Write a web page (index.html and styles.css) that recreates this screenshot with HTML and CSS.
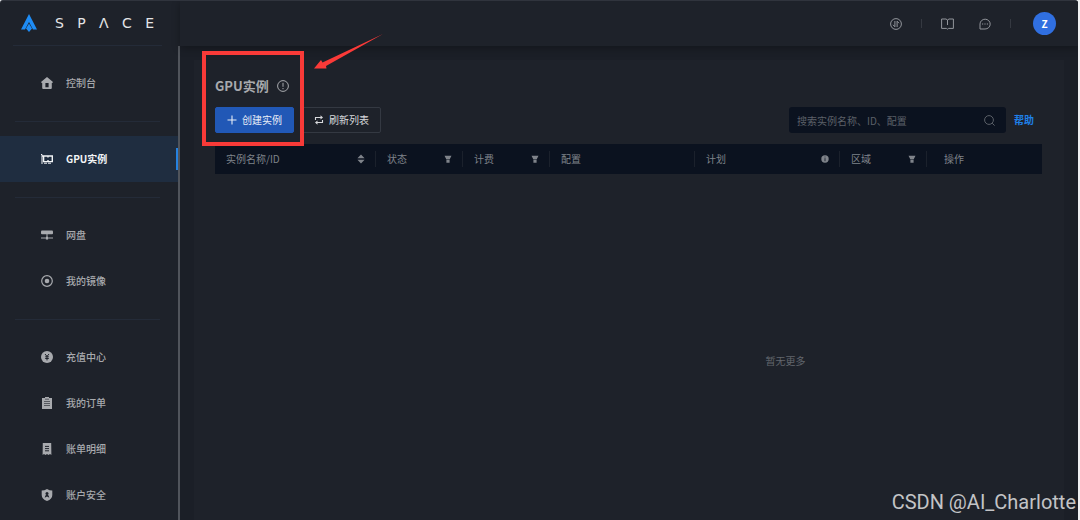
FILE: index.html
```html
<!DOCTYPE html>
<html lang="zh-CN">
<head>
  <meta charset="utf-8">
  <title>GPU实例</title>
  <link rel="stylesheet" href="styles.css">
</head>
<body>

  <div class="window">
    <aside class="sidebar">
      <a class="logo" href="#" aria-label="SPACE">
        <svg width="16" height="18" viewBox="0 0 16 18" fill="#1e8cf5">
          <path d="M8 0 L16 15.5 L12 15.5 L8 8 L4 15.5 L0 15.5 Z"/>
          <path d="M8 9.5 L11 14.5 L8 18 L5 14.5 Z"/>
        </svg>
        <span class="logo-name"><span>S</span><span>P</span><span>Λ</span><span>C</span><span>E</span></span>
      </a>

      <nav class="menu">
        <a class="menu-item" href="#">
          <svg width="12" height="12" viewBox="0 0 12 12"><path fill="currentColor" fill-rule="evenodd" d="M6 0 L12 5 L11.3 6 L10.8 6 V11 Q10.8 12 9.8 12 H2.2 Q1.2 12 1.2 11 V6 H.7 L0 5 Z M4.4 6 V10.3 H7.6 V6 Z"/></svg>
          控制台
        </a>
        <hr>
        <a class="menu-item active" href="#">
          <svg width="12" height="12" viewBox="0 0 12 12" fill="none" stroke="currentColor">
            <path d="M0 1.5 H1 V11" stroke-width="1"/>
            <path d="M1 3 H11.3 V8.6 H2.6 V3 M7 3 V4.6 M7 7 V8.6" stroke-width="1.4"/>
            <path d="M3 10.2 H10" stroke-width="1" stroke-dasharray="3 1"/>
          </svg>
          GPU实例
        </a>
        <hr>
        <a class="menu-item" href="#">
          <svg width="12" height="12" viewBox="0 0 12 12" fill="currentColor">
            <rect x="0" y="1.6" width="12" height="3.6" rx="1"/>
            <path d="M5.5 5 H6.5 V8 H5.5 Z M0 8.6 H4.3 V9.6 H0 Z M7.7 8.6 H12 V9.6 H7.7 Z"/>
            <circle cx="6" cy="9.1" r="1.6"/>
          </svg>
          网盘
        </a>
        <a class="menu-item" href="#">
          <svg width="12" height="12" viewBox="0 0 12 12">
            <circle cx="6" cy="6" r="5.3" fill="none" stroke="currentColor" stroke-width="1.2"/>
            <circle cx="6" cy="6" r="2.3" fill="currentColor"/>
          </svg>
          我的镜像
        </a>
        <hr>
        <a class="menu-item" href="#">
          <svg width="12" height="12" viewBox="0 0 12 12">
            <circle cx="6" cy="6" r="6" fill="currentColor"/>
            <path d="M4 3 L6 5.4 L8 3 M6 5.4 V9.4 M4.2 5.8 H7.8 M4.2 7.5 H7.8" fill="none" stroke="#1e222a"/>
          </svg>
          充值中心
        </a>
        <a class="menu-item" href="#">
          <svg width="12" height="12" viewBox="0 0 12 12">
            <path fill="currentColor" d="M1 1 H4 V0 H8 V1 H11 V12 H1 Z"/>
            <path d="M4 2.2 H8 M3 4.5 H9 M3 6.5 H9 M3 8.5 H9" stroke="#1e222a" stroke-width=".6"/>
          </svg>
          我的订单
        </a>
        <a class="menu-item" href="#">
          <svg width="12" height="12" viewBox="0 0 12 12">
            <path fill="currentColor" d="M1.8 0 H10.2 L10.4 12 L9 11 L7.5 12 L6 11 L4.5 12 L3 11 L1.6 12 Z"/>
            <path d="M4 3.4 H8 M4 5.6 H8 M4 7.8 H8" stroke="#1e222a" stroke-width="1"/>
          </svg>
          账单明细
        </a>
        <a class="menu-item" href="#">
          <svg width="12" height="12" viewBox="0 0 12 12">
            <path fill="currentColor" d="M6 0 Q8.5 1.5 11.3 1.6 V6 Q11.3 10 6 12 Q.7 10 .7 6 V1.6 Q3.5 1.5 6 0 Z"/>
            <circle cx="6" cy="4.5" r="1.5" fill="#1e222a"/>
            <path d="M3.8 9 Q4 5.7 6 5.7 Q8 5.7 8.2 9 L7 7.8 H5 Z" fill="#1e222a"/>
          </svg>
          账户安全
        </a>
      </nav>
    </aside>

    <div class="page">
      <header class="topbar">
        <button class="icon-button" aria-label="切换">
          <svg width="12" height="12" viewBox="0 0 12 12" fill="none" stroke="currentColor">
            <circle cx="6" cy="6" r="5.4"/>
            <path d="M4.9 3 V8.8 L3 6.8 M7.1 9 V3.2 L9 5.2"/>
          </svg>
        </button>
        <span class="split"></span>
        <button class="icon-button" aria-label="文档">
          <svg width="13" height="12" viewBox="0 0 13 12" fill="none" stroke="currentColor">
            <path d="M.6 1 H5 L6.5 2 L8 1 H12.4 V10.4 H7.6 L6.5 11.2 L5.4 10.4 H.6 Z M6.5 2 V7"/>
          </svg>
        </button>
        <button class="icon-button" aria-label="消息">
          <svg width="12" height="12" viewBox="0 0 12 12" fill="none" stroke="currentColor">
            <path d="M1 11 V6 A5.1 4.9 0 1 1 6 11 Z"/>
            <path d="M3 6 H4.2 M5.4 6 H6.6 M7.8 6 H9" stroke-width="1.2"/>
          </svg>
        </button>
        <span class="split"></span>
        <button class="avatar">Z</button>
      </header>

      <main class="content">
        <h1 class="title">
          GPU实例
          <svg width="12" height="12" viewBox="0 0 12 12" fill="none" stroke="currentColor">
            <circle cx="6" cy="6" r="5.4"/>
            <path d="M6 2.8 V6.8 M6 8 V9.2"/>
          </svg>
        </h1>

        <div class="toolbar">
          <button class="btn primary">
            <svg width="10" height="10" viewBox="0 0 10 10" stroke="currentColor"><path d="M5 .5 V9.5 M.5 5 H9.5" stroke-width="1.1"/></svg>
            创建实例
          </button>
          <button class="btn">
            <svg width="10" height="10" viewBox="0 0 10 10" fill="none" stroke="currentColor">
              <path d="M1.5 5 V2.5 H7 M8.5 5 V7.5 H3" stroke-width="1.1"/>
              <path d="M6.5 .3 L9 2.5 L6.5 4.5 Z M3.5 5.5 L1 7.5 L3.5 9.7 Z" fill="currentColor" stroke="none"/>
            </svg>
            刷新列表
          </button>
          <label class="search">
            <input type="text" placeholder="搜索实例名称、ID、配置" aria-label="搜索">
            <svg width="11" height="11" viewBox="0 0 11 11" fill="none" stroke="currentColor">
              <circle cx="5" cy="5" r="4.4"/>
              <path d="M8.2 8.2 L10.6 10.6"/>
            </svg>
          </label>
          <a class="help" href="#">帮助</a>
        </div>

        <table class="list">
          <colgroup>
            <col>
            <col class="col-small">
            <col class="col-small">
            <col class="col-medium">
            <col class="col-medium">
            <col class="col-small">
            <col class="col-action">
          </colgroup>
          <thead>
            <tr>
              <th><div class="cell">实例名称/ID
                <svg width="8" height="10" viewBox="0 0 8 10" fill="currentColor"><path d="M4 .5 L7.6 4.2 H.4 Z M4 9.5 L7.6 5.8 H.4 Z"/></svg></div></th>
              <th><div class="cell">状态
                <svg width="8" height="8" viewBox="0 0 8 8" fill="currentColor"><path d="M.5 .8 H7.5 L5.6 4.4 H2.4 Z M2.4 5 H5.6 V7.8 H2.4 Z"/></svg></div></th>
              <th><div class="cell">计费
                <svg width="8" height="8" viewBox="0 0 8 8" fill="currentColor"><path d="M.5 .8 H7.5 L5.6 4.4 H2.4 Z M2.4 5 H5.6 V7.8 H2.4 Z"/></svg></div></th>
              <th><div class="cell">配置</div></th>
              <th><div class="cell">计划
                <svg width="8" height="8" viewBox="0 0 8 8"><circle cx="4" cy="4" r="3.7" fill="currentColor"/><path d="M4 1.6 V2.4 M4 3.2 V6.2" stroke="#0b121f" stroke-width=".8"/></svg></div></th>
              <th><div class="cell">区域
                <svg width="8" height="8" viewBox="0 0 8 8" fill="currentColor"><path d="M.5 .8 H7.5 L5.6 4.4 H2.4 Z M2.4 5 H5.6 V7.8 H2.4 Z"/></svg></div></th>
              <th><div class="cell">操作</div></th>
            </tr>
          </thead>
        </table>

        <p class="empty">暂无更多</p>
      </main>
    </div>
  </div>

  <!-- Red marker around the create button -->
  <div class="marker"></div>
  <svg class="arrow" width="70" height="36" viewBox="0 0 70 36">
    <path fill="#fb3a38" d="M0 34.5 L7 26 L8.5 28.5 L69 0 L12 32 L12.5 34.5 Z"/>
  </svg>
  <div class="watermark">CSDN @AI_Charlotte</div>

</body>
</html>
```
FILE: styles.css
```css
* {
  box-sizing: border-box;
}

body {
  margin: 0;
  background: #f0f1f3;
  font-family: "Noto Sans CJK SC", sans-serif;
  font-size: 10px;
  line-height: 14px;
  color: #a8aaae;
}

a {
  color: inherit;
  text-decoration: none;
}

button {
  border: none;
  background: none;
  padding: 0;
  font-family: inherit;
  font-size: 10px;
  line-height: 14px;
  color: inherit;
  cursor: pointer;
}

svg {
  flex: none;
}

.window {
  display: flex;
  height: 100vh;
  margin-right: 2px;
  background: #1e222a;
  border-top: 1px solid #30343d;
  border-radius: 3px 3px 0 0;
  overflow: hidden;
}

/* Sidebar */
.sidebar {
  width: 180px;
  flex: none;
  display: flex;
  flex-direction: column;
}

.logo {
  height: 45px;
  flex: none;
  display: flex;
  align-items: center;
  gap: 18px;
  margin: 0 18px 0 13px;
  padding: 0 8px;
  border-bottom: 1px solid #242b38;
}

.logo-name {
  flex: 1;
  display: flex;
  justify-content: space-between;
  font-family: "DejaVu Sans", sans-serif;
  font-size: 14px;
  line-height: 16px;
  color: #e4e5e7;
}

.menu {
  flex: 1;
  min-height: 0;
  overflow: hidden;
  padding-top: 14px;
  border-right: 2px solid #50545b;
}

.menu-item {
  display: flex;
  align-items: center;
  gap: 13px;
  height: 46px;
  padding-left: 41px;
  font-weight: 500;
}

.menu-item.active {
  background: #1f2d40;
  color: #f2f4f6;
  font-weight: bold;
  position: relative;
}

.menu-item.active::after {
  content: "";
  position: absolute;
  right: 0;
  top: 12px;
  width: 2px;
  height: 22px;
  background: #2682e0;
}

.menu hr {
  height: 1px;
  margin: 15px 18px 14px 15px;
  border: none;
  background: #242b38;
}

/* Right side */
.page {
  flex: 1;
  min-width: 0;
  display: flex;
  flex-direction: column;
  background: #1b1f27;
}

.topbar {
  height: 45px;
  flex: none;
  display: flex;
  align-items: center;
  justify-content: flex-end;
  padding-right: 22px;
  background: #1e222a;
  box-shadow: 0 2px 8px rgba(0, 0, 0, 0.3);
}

.icon-button {
  display: flex;
  justify-content: center;
  width: 38px;
  color: #92959b;
}

.split {
  width: 1px;
  height: 9px;
  margin: 0 6px;
  background: #353941;
}

.avatar {
  width: 23px;
  height: 23px;
  margin-left: 16px;
  border-radius: 50%;
  background: #306fe0;
  color: #fff;
  font-weight: bold;
}

.content {
  flex: 1;
  margin: 14px 14px 0;
  padding: 16px 22px 0 21px;
  background: #1e222a;
}

.title {
  display: flex;
  align-items: center;
  gap: 8px;
  margin: 0 0 11px;
  font-size: 13px;
  line-height: 20px;
}

.toolbar {
  display: flex;
  align-items: center;
  gap: 8px;
  margin-bottom: 11px;
}

.btn {
  display: flex;
  align-items: center;
  justify-content: center;
  gap: 5px;
  width: 79px;
  height: 26px;
  border: 1px solid #343942;
  border-radius: 2px;
  color: #d8d9dc;
}

.btn.primary {
  background: #2158b6;
  border-color: #2158b6;
  color: #e8edf6;
}

.search {
  display: flex;
  align-items: center;
  width: 217px;
  height: 26px;
  margin-left: auto;
  padding: 0 11px 0 8px;
  border-radius: 3px;
  background: #0b121f;
  color: #5b6068;
}

.search input {
  flex: 1;
  min-width: 0;
  padding: 0;
  border: none;
  outline: none;
  background: none;
  font-family: inherit;
  font-size: 10px;
  color: #a8aaae;
}

.search input::placeholder {
  color: #5b6068;
}

.help {
  margin-right: 8px;
  color: #1f80e8;
  font-weight: bold;
}

/* Table */
.list {
  width: 100%;
  table-layout: fixed;
  border-collapse: collapse;
  background: #0b121f;
}

.col-small {
  width: 87px;
}

.col-medium {
  width: 145px;
}

.col-action {
  width: 115px;
}

.list th {
  height: 30px;
  padding: 0;
  font-weight: normal;
  color: #7f838a;
}

.cell {
  display: flex;
  align-items: center;
  justify-content: space-between;
  height: 16px;
  padding: 0 10px 0 11px;
  border-right: 1px solid #1b212c;
}

.list th:last-child .cell {
  padding-left: 17px;
  border-right: none;
}

.empty {
  margin: 180px 0 0;
  padding-left: 314px;
  text-align: center;
  color: #62666d;
}

/* Things lying over the page */
.marker {
  position: absolute;
  left: 202px;
  top: 51px;
  width: 102px;
  height: 95px;
  border: 4px solid #f83a38;
}

.arrow {
  position: absolute;
  left: 314px;
  top: 34px;
}

.watermark {
  position: absolute;
  right: 4px;
  bottom: 6px;
  font-family: Roboto, sans-serif;
  font-size: 20px;
  line-height: 24px;
  color: #c3c4c6;
}
```
